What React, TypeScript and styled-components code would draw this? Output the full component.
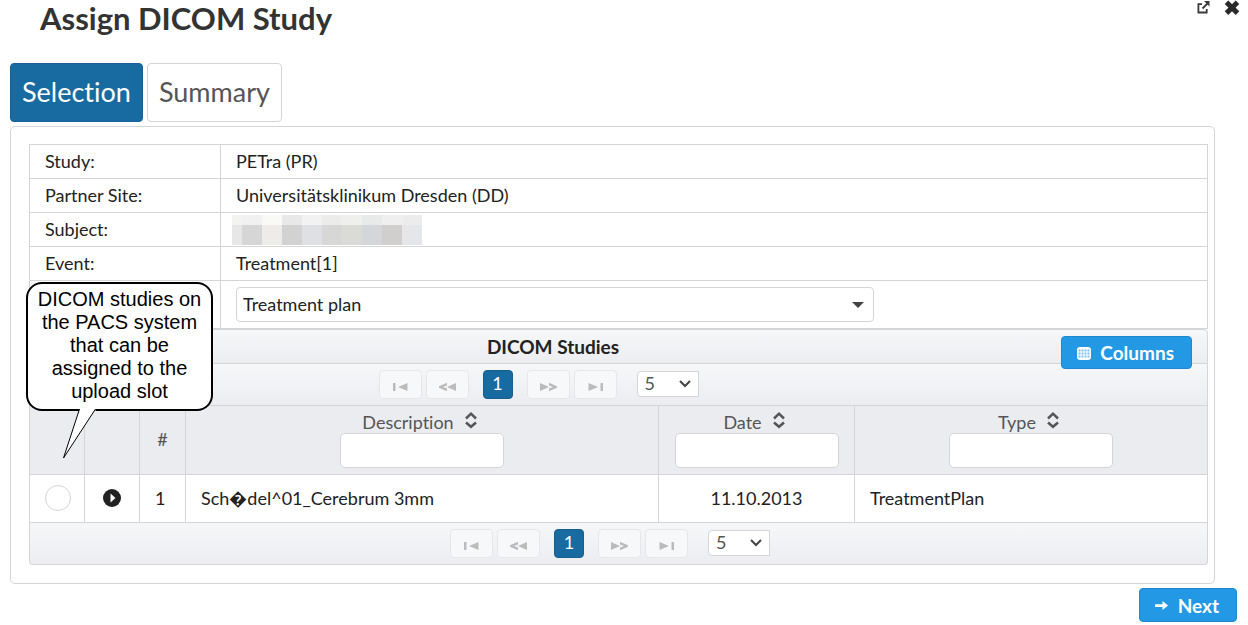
import React from "react";
import styled, { createGlobalStyle, css } from "styled-components";

const line = "#d5d5d5";
const sans = `Lato, "Liberation Sans", sans-serif`;

const GlobalStyle = createGlobalStyle`
  *, *::before, *::after { box-sizing: border-box; }
  body {
    margin: 0;
    background: #fff;
    color: #222;
    font-family: ${sans};
    font-size: 18px;
    line-height: 22px;
    font-variant-ligatures: none;
  }
  button, input, select { font-family: inherit; font-size: inherit; font-variant-ligatures: inherit; margin: 0; }
`;

const Dialog = styled.main`
  position: relative;
  padding: 0 10px;
`;

const TitleBar = styled.header`
  display: flex;
  justify-content: space-between;
  align-items: flex-start;
  height: 63px;
  padding-left: 30px;
`;

const Title = styled.h1`
  margin: 0;
  font-size: 31px;
  font-weight: 700;
  line-height: 36px;
  color: #333;
`;

const TitleActions = styled.div`
  display: flex;
  gap: 13px;
  margin-right: -2px;
`;

const IconButton = styled.button`
  display: flex;
  padding: 0;
  border: 0;
  background: none;
  cursor: pointer;
`;

const Tabs = styled.nav`
  display: flex;
  gap: 4px;
`;

const Tab = styled.button<{ $active?: boolean }>`
  height: 59px;
  padding: 0 11px 2px;
  border: 1px solid ${(p) => (p.$active ? "#15609a" : line)};
  border-radius: 4px;
  background: ${(p) => (p.$active ? "#186ba0" : "#fff")};
  color: ${(p) => (p.$active ? "#fff" : "#555")};
  font-size: 27px;
  line-height: 34px;
  cursor: pointer;
`;

const Panel = styled.section`
  margin: 4px 23px 0 0;
  padding: 17px 6px 18px 18px;
  border: 1px solid ${line};
  border-radius: 5px;
`;

const InfoTable = styled.table`
  width: 100%;
  border-collapse: collapse;
  table-layout: fixed;
  th, td {
    height: 34px;
    padding: 0 15px 2px;
    border: 1px solid ${line};
    text-align: left;
    font-weight: 400;
  }
  th { width: 191px; }
`;

const SelectCell = styled.td`
  && { height: 48px; padding-bottom: 0; }
`;

const Redacted = styled.div`
  display: grid;
  grid-template-columns: 10px repeat(9, 20px);
  grid-template-rows: 10px 20px;
  width: 190px;
  margin: 2px 0 -1px -4px;
`;

const Cell = styled.span<{ $tone: string }>`
  background: ${(p) => p.$tone};
`;

const SlotField = styled.div`
  position: relative;
  width: 638px;
  max-width: 100%;
`;

const SlotSelect = styled.select`
  display: block;
  width: 100%;
  height: 35px;
  padding: 0 6px 2px;
  border: 1px solid ${line};
  border-radius: 4px;
  background: #fff;
  color: #222;
  appearance: none;
`;

const SelectArrow = styled.svg<{ $right: number }>`
  position: absolute;
  top: 50%;
  right: ${(p) => p.$right}px;
  transform: translateY(-50%);
  pointer-events: none;
`;

const bar = css`
  border: 1px solid ${line};
  background: linear-gradient(#f6f7f9, #ebedf0);
`;

const StudiesHeader = styled.div`
  ${bar}
  position: relative;
  height: 35px;
  border-radius: 4px 4px 0 0;
  text-align: center;
`;

const StudiesTitle = styled.h2`
  margin: 0;
  padding-right: 131px;
  font-size: 19px;
  font-weight: 700;
  line-height: 34px;
`;

const PrimaryButton = styled.button<{ $compact?: boolean }>`
  display: flex;
  align-items: center;
  gap: 8px;
  height: ${(p) => (p.$compact ? 33 : 34)}px;
  padding: 0 17px 0 14px;
  border: 1px solid #1f89ce;
  border-radius: 4px;
  background: #2399e5;
  color: #fff;
  font-size: 19px;
  font-weight: 700;
  cursor: pointer;
`;

const ColumnsSlot = styled.div`
  position: absolute;
  top: 6px;
  right: 15px;
`;

const Pager = styled.div<{ $last?: boolean }>`
  ${bar}
  border-top: 0;
  display: flex;
  justify-content: center;
  align-items: center;
  gap: 4px;
  height: 42px;
  padding-right: ${(p) => (p.$last ? 17 : 160)}px;
  border-radius: ${(p) => (p.$last ? "0 0 4px 4px" : "0")};
`;

const PagerButton = styled.button`
  display: flex;
  align-items: center;
  justify-content: center;
  width: 43px;
  height: 29px;
  padding: 4px 0 0;
  border: 1px solid #e6e7e9;
  border-radius: 4px;
  background: #f7f8f9;
`;

const PageNumber = styled.button`
  width: 30px;
  height: 29px;
  margin: 0 10px;
  padding: 0 0 3px;
  border: 1px solid #15608f;
  border-radius: 4px;
  background: #186ba0;
  color: #fff;
`;

const SizeField = styled.div`
  position: relative;
  margin: 0 0 2px 16px;
`;

const SizeSelect = styled.select`
  display: block;
  width: 62px;
  height: 26px;
  padding: 0 7px 2px;
  border: 1px solid ${line};
  border-radius: 4px 0 0 4px;
  background: #fff;
  color: #555;
  appearance: none;
`;

const StudyTable = styled.table`
  width: 100%;
  border-collapse: separate;
  border-spacing: 0;
  table-layout: fixed;
  border-left: 1px solid ${line};
  th, td {
    padding: 0 0 2px;
    border-right: 1px solid ${line};
    border-bottom: 1px solid ${line};
    text-align: center;
    font-weight: 400;
  }
  th { height: 69px; background: #ebecf0; color: #555; }
  td { height: 48px; }
`;

const Col = styled.col<{ $w?: number }>`
  width: ${(p) => (p.$w ? `${p.$w}px` : "auto")};
`;

const TextCell = styled.td`
  && { padding: 0 15px 2px; text-align: left; }
`;

const HeadLabel = styled.label`
  display: flex;
  flex-direction: column;
  align-items: center;
`;

const HeadText = styled.span`
  display: flex;
  align-items: flex-start;
  gap: 11px;
  padding-right: 5px;
`;

const Filter = styled.input`
  width: 164px;
  height: 35px;
  border: 1px solid ${line};
  border-radius: 5px;
  background: #fff;
`;

const Radio = styled.input`
  display: block;
  width: 26px;
  height: 26px;
  margin: 0 auto;
  border: 1px solid ${line};
  border-radius: 50%;
  background: #fff;
  appearance: none;
`;

const RadioCell = styled.td`
  && { padding-left: 2px; }
`;

const Toggle = styled(IconButton)`
  margin: 0 auto;
`;

const Footer = styled.footer`
  display: flex;
  justify-content: flex-end;
  margin: 4px 1px 0 0;
`;

const Callout = styled.aside`
  position: absolute;
  top: 282px;
  left: 26px;
  width: 187px;
  padding: 4px 0 6px;
  border: 2px solid #000;
  border-radius: 16px;
  background: #fff;
  color: #000;
  font-family: "Liberation Sans", Arial, sans-serif;
  font-size: 20px;
  line-height: 23px;
  text-align: center;
`;

const CalloutTail = styled.svg`
  position: absolute;
  top: 100%;
  left: 34px;
`;

const ExternalIcon = () => (
  <svg width="15" height="15" viewBox="0 0 15 15" fill="none" stroke="#3a3a3a" strokeWidth="1.8">
    <path d="M6 4.200H2.400v8.300h8.300V9" />
    <path d="M6.500 8.500 11.500 3.500" />
    <path d="M8 1h5.500v5.500z" fill="#3a3a3a" stroke="none" />
  </svg>
);

const CloseIcon = () => (
  <svg width="16" height="16" viewBox="0 0 16 16" fill="none" stroke="#2a2a2a" strokeWidth="5">
    <path d="M2.500 2.300l11 10.800M13.500 2.300l-11 10.800" />
  </svg>
);

const GridIcon = () => (
  <svg width="16" height="16" viewBox="0 0 16 16">
    <rect x="1" y="2" width="14" height="13" rx="3" fill="#fff" />
    <g fill="#7cc2ef">
      {[4, 7, 10].map((y) => [3, 6, 9, 12].map((x) => <rect key={`${x}-${y}`} x={x - 0.5} y={y + 0.5} width="2" height="2" />))}
    </g>
  </svg>
);

const ArrowIcon = () => (
  <svg width="16" height="16" viewBox="0 0 16 16">
    <path d="M1 7.200h7.500V4L14 8.500 8.500 13V10H1z" fill="#fff" />
  </svg>
);

const SortIcon = () => (
  <svg width="12" height="18" viewBox="0 0 12 18" fill="none" stroke="#555" strokeWidth="2.500">
    <path d="M1 7.500l5-4.800 5 4.800M1 11.500l5 4.300 5-4.300" />
  </svg>
);

const PlayIcon = () => (
  <svg width="18" height="18" viewBox="0 0 18 18">
    <circle cx="9" cy="9" r="9" fill="#222" />
    <path d="M7.500 4.500v9L12.500 9z" fill="#fff" />
  </svg>
);

const pagerShapes = {
  first: "M1 1h2.500v8H1zM15.500 1v8L6 5z",
  prev: "M17 1v8L8 5zM8 .8v2.600L4 5l4 1.600v2.600L0 5.700V4.300z",
  next: "M0 1v8l9-4zM9 .8v2.600L13 5l-4 1.600v2.600l8-3.500V4.300z",
  last: "M1.500 1v8L11 5zM13.500 1H16v8h-2.500z",
};

const PagerIcon = ({ kind }: { kind: keyof typeof pagerShapes }) => (
  <svg width="17" height="10" viewBox="0 0 17 10">
    <path d={pagerShapes[kind]} fill="#bbb" />
  </svg>
);

const Paginator = ({ last }: { last?: boolean }) => (
  <Pager $last={last}>
    <PagerButton aria-label="First page" disabled><PagerIcon kind="first" /></PagerButton>
    <PagerButton aria-label="Previous page" disabled><PagerIcon kind="prev" /></PagerButton>
    <PageNumber>1</PageNumber>
    <PagerButton aria-label="Next page" disabled><PagerIcon kind="next" /></PagerButton>
    <PagerButton aria-label="Last page" disabled><PagerIcon kind="last" /></PagerButton>
    <SizeField>
      <SizeSelect aria-label="Rows per page"><option>5</option></SizeSelect>
      <SelectArrow $right={8} width="12" height="8" viewBox="0 0 12 8">
        <path d="M1 1l5 5 5-5" fill="none" stroke="#444" strokeWidth="2" />
      </SelectArrow>
    </SizeField>
  </Pager>
);

const FilterHead = ({ name }: { name: string }) => (
  <th scope="col">
    <HeadLabel>
      <HeadText>{name}<SortIcon /></HeadText>
      <Filter type="text" />
    </HeadLabel>
  </th>
);

const tones = [
  "#f3f3f2", "#f1f1f1", "#f9f9f7", "#e8e8e8", "#f2f2f2", "#ececeb", "#efefed", "#e8eae9", "#efefef", "#ececec",
  "#e7e7e7", "#d6d6d6", "#eeecea", "#d2d2d2", "#dfe0e3", "#d7d7d5", "#dadad6", "#d5d6d9", "#d0cfcd", "#e5e6e9",
];

export default function App() {
  return (
    <>
      <GlobalStyle />
      <Dialog>
        <TitleBar>
          <Title>Assign DICOM Study</Title>
          <TitleActions>
            <IconButton aria-label="Open in new window"><ExternalIcon /></IconButton>
            <IconButton aria-label="Close"><CloseIcon /></IconButton>
          </TitleActions>
        </TitleBar>
        <Tabs>
          <Tab $active>Selection</Tab>
          <Tab>Summary</Tab>
        </Tabs>
        <Panel>
          <InfoTable>
            <tbody>
              <tr><th scope="row">Study:</th><td>PETra (PR)</td></tr>
              <tr><th scope="row">Partner Site:</th><td>Universitätsklinikum Dresden (DD)</td></tr>
              <tr>
                <th scope="row">Subject:</th>
                <td><Redacted>{tones.map((t, i) => <Cell key={i} $tone={t} />)}</Redacted></td>
              </tr>
              <tr><th scope="row">Event:</th><td>Treatment[1]</td></tr>
              <tr>
                <th />
                <SelectCell>
                  <SlotField>
                    <SlotSelect aria-label="Upload slot"><option>Treatment plan</option></SlotSelect>
                    <SelectArrow $right={10} width="12" height="6" viewBox="0 0 12 6">
                      <path d="M0 0h12L6 6z" fill="#444" />
                    </SelectArrow>
                  </SlotField>
                </SelectCell>
              </tr>
            </tbody>
          </InfoTable>
          <StudiesHeader>
            <StudiesTitle>DICOM Studies</StudiesTitle>
            <ColumnsSlot>
              <PrimaryButton $compact><GridIcon />Columns</PrimaryButton>
            </ColumnsSlot>
          </StudiesHeader>
          <Paginator />
          <StudyTable>
            <colgroup>
              <Col $w={55} /><Col $w={55} /><Col $w={46} /><Col /><Col $w={196} /><Col $w={353} />
            </colgroup>
            <thead>
              <tr>
                <th /><th /><th scope="col">#</th>
                <FilterHead name="Description" />
                <FilterHead name="Date" />
                <FilterHead name="Type" />
              </tr>
            </thead>
            <tbody>
              <tr>
                <RadioCell><Radio type="radio" name="study" aria-label="Select study 1" /></RadioCell>
                <td><Toggle aria-label="Expand row"><PlayIcon /></Toggle></td>
                <TextCell>1</TextCell>
                <TextCell>Sch{"\uFFFD"}del^01_Cerebrum 3mm</TextCell>
                <td>11.10.2013</td>
                <TextCell>TreatmentPlan</TextCell>
              </tr>
            </tbody>
          </StudyTable>
          <Paginator last />
        </Panel>
        <Footer>
          <PrimaryButton><ArrowIcon />Next</PrimaryButton>
        </Footer>
        <Callout>
          DICOM studies on<br />the PACS system<br />that can be<br />assigned to the<br />upload slot
          <CalloutTail width="36" height="51" viewBox="0 0 36 51">
            <path d="M17.500 0h16v2h-16z" fill="#fff" />
            <path d="M17.500 0L1.500 49 33.500 0" fill="#fff" stroke="#000" strokeWidth="1" />
          </CalloutTail>
        </Callout>
      </Dialog>
    </>
  );
}
